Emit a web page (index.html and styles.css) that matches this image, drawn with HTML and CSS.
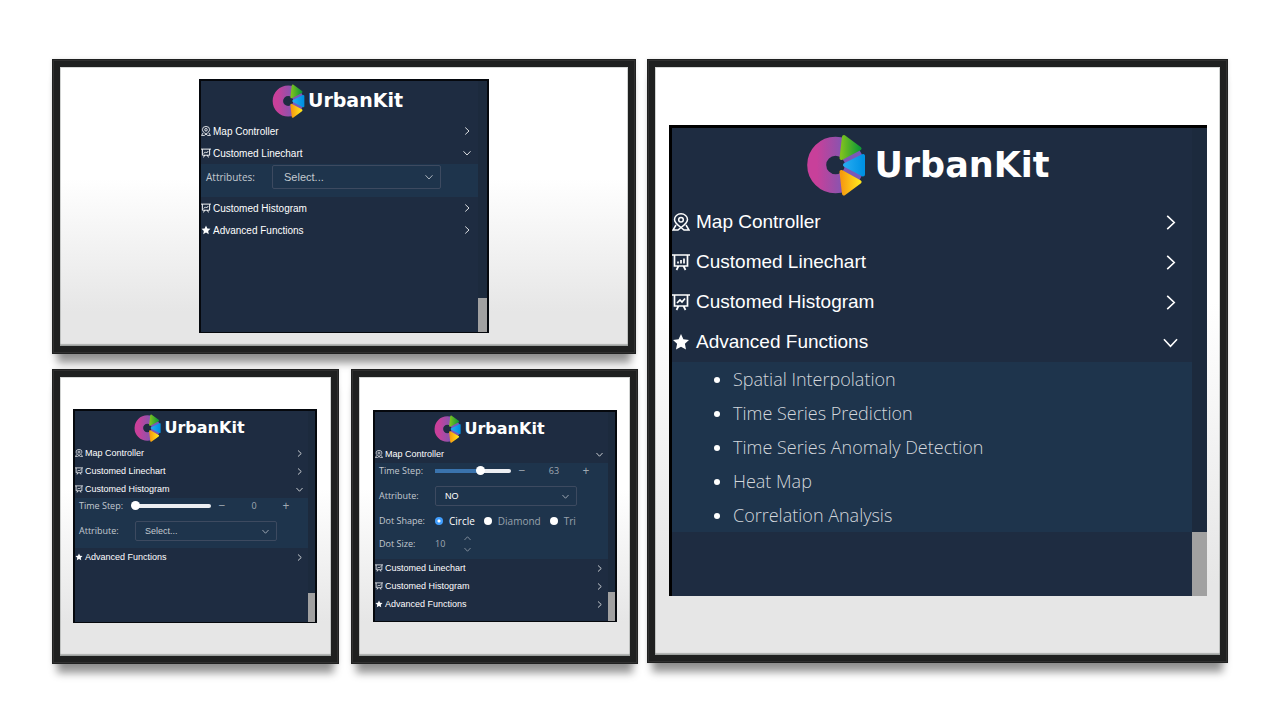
FILE: index.html
```html
<!DOCTYPE html>
<html lang="en">
<head>
<meta charset="utf-8">
<title>UrbanKit</title>
<link rel="stylesheet" href="styles.css">
</head>
<body>
<svg class="sprite" width="0" height="0" aria-hidden="true">
  <defs>
    <linearGradient id="g-ring"><stop offset="0" stop-color="#c8409a"/><stop offset=".5" stop-color="#984fa9"/><stop offset=".8" stop-color="#7a58b8"/><stop offset="1" stop-color="#7a58b8"/></linearGradient>
    <linearGradient id="g-green"><stop offset="0" stop-color="#7dc11f"/><stop offset="1" stop-color="#119a35"/></linearGradient>
    <linearGradient id="g-blue"><stop offset="0" stop-color="#25aaf0"/><stop offset="1" stop-color="#0092e4"/></linearGradient>
    <linearGradient id="g-gold"><stop offset="0" stop-color="#f69a10"/><stop offset="1" stop-color="#ffe51c"/></linearGradient>
  </defs>
  <symbol id="mark" viewBox="0 0 60 62">
    <circle cx="28.5" cy="31" r="18.8" fill="none" stroke="url(#g-ring)" stroke-width="19"/>
    <g stroke-width="4" stroke-linejoin="round">
      <path d="M37 3L52.500 14.500L34.500 24Z" fill="url(#g-green)" stroke="url(#g-green)"/>
      <path d="M38 31L56 22V40.500Z" fill="url(#g-blue)" stroke="url(#g-blue)"/>
      <path d="M34.500 38L52.500 48L37 59.500Z" fill="url(#g-gold)" stroke="url(#g-gold)"/>
    </g>
  </symbol>
  <symbol id="pin" viewBox="0 0 18 18">
    <g fill="none" stroke="currentColor" stroke-width="1.5">
      <path d="M9 14.500C5.500 12 2.500 9.500 2.500 6.500a6.500 5.700 0 0 1 13 0C15.500 9.500 12.500 12 9 14.500Z"/>
      <circle cx="9" cy="6.800" r="2.300"/>
      <path d="M4 12L1 17H6L9 14.500L12 17H17L14 12"/>
    </g>
  </symbol>
  <symbol id="bars" viewBox="0 0 18 18">
    <path d="M0 2H18M2.500 2V13H15.500V2M6.500 13L4.500 17M11.500 13L13.500 17M6 8.500V10.500M9 7V10.500M12 5.500V10.500" fill="none" stroke="currentColor" stroke-width="1.700"/>
  </symbol>
  <symbol id="line" viewBox="0 0 18 18">
    <path d="M0 2H18M2.500 2V13H15.500V2M6.500 13L4.500 17M11.500 13L13.500 17M5 10L8 7L10 9L13 5.500" fill="none" stroke="currentColor" stroke-width="1.700"/>
  </symbol>
  <symbol id="star" viewBox="0 0 18 18">
    <path d="M9 1L11.400 6.200L17 6.900L12.900 10.700L14 16.500L9 13.700L4 16.500L5.100 10.700L1 6.900L6.600 6.200Z" fill="currentColor"/>
  </symbol>
  <symbol id="right" viewBox="0 0 16 16">
    <path d="M4.500 1L12 8L4.500 15" fill="none" stroke="currentColor" stroke-width="1.700"/>
  </symbol>
  <symbol id="down" viewBox="0 0 16 16">
    <path d="M1 4.500L8 12L15 4.500" fill="none" stroke="currentColor" stroke-width="1.700"/>
  </symbol>
  <symbol id="up" viewBox="0 0 16 16">
    <path d="M1 11.500L8 4L15 11.500" fill="none" stroke="currentColor" stroke-width="1.700"/>
  </symbol>
</svg>

<main class="board">
  <div class="column">
    <section class="frame frame-wide">
      <div class="kit kit-md">
        <div class="content">
          <header class="brand"><svg class="mark" aria-hidden="true"><use href="#mark"/></svg><span class="wordmark">UrbanKit</span></header>
          <button class="row"><svg class="icon"><use href="#pin"/></svg><span>Map Controller</span><svg class="chev"><use href="#right"/></svg></button>
          <button class="row"><svg class="icon"><use href="#line"/></svg><span>Customed Linechart</span><svg class="chev"><use href="#down"/></svg></button>
          <div class="fields">
            <div class="field"><label for="a-attr">Attributes:</label>
              <div class="select"><select id="a-attr"><option>Select...</option></select><svg><use href="#down"/></svg></div></div>
          </div>
          <button class="row"><svg class="icon"><use href="#line"/></svg><span>Customed Histogram</span><svg class="chev"><use href="#right"/></svg></button>
          <button class="row"><svg class="icon"><use href="#star"/></svg><span>Advanced Functions</span><svg class="chev"><use href="#right"/></svg></button>
        </div>
        <div class="track"><div class="thumb"></div></div>
      </div>
    </section>

    <div class="pair">
      <section class="frame frame-small">
        <div class="kit kit-sm">
          <div class="content">
            <header class="brand"><svg class="mark" aria-hidden="true"><use href="#mark"/></svg><span class="wordmark">UrbanKit</span></header>
            <button class="row"><svg class="icon"><use href="#pin"/></svg><span>Map Controller</span><svg class="chev"><use href="#right"/></svg></button>
            <button class="row"><svg class="icon"><use href="#line"/></svg><span>Customed Linechart</span><svg class="chev"><use href="#right"/></svg></button>
            <button class="row"><svg class="icon"><use href="#line"/></svg><span>Customed Histogram</span><svg class="chev"><use href="#down"/></svg></button>
            <div class="fields">
              <div class="field"><label for="b-step">Time Step:</label>
                <div class="range"><input class="slider" id="b-step" type="range" min="0" max="100" value="0" style="--fill:0%"><button class="sign" aria-label="Decrease">−</button><input class="number" type="text" value="0" aria-label="Time step value"><button class="sign" aria-label="Increase">+</button></div></div>
              <div class="field"><label for="b-attr">Attribute:</label>
                <div class="select"><select id="b-attr"><option>Select...</option></select><svg><use href="#down"/></svg></div></div>
            </div>
            <button class="row"><svg class="icon"><use href="#star"/></svg><span>Advanced Functions</span><svg class="chev"><use href="#right"/></svg></button>
          </div>
          <div class="track"><div class="thumb"></div></div>
        </div>
      </section>

      <section class="frame frame-map">
        <div class="kit kit-sm">
          <div class="content">
            <header class="brand"><svg class="mark" aria-hidden="true"><use href="#mark"/></svg><span class="wordmark">UrbanKit</span></header>
            <button class="row"><svg class="icon"><use href="#pin"/></svg><span>Map Controller</span><svg class="chev"><use href="#down"/></svg></button>
            <div class="fields">
              <div class="field"><label for="c-step">Time Step:</label>
                <div class="range"><input class="slider" id="c-step" type="range" min="0" max="100" value="63" style="--fill:63%"><button class="sign" aria-label="Decrease">−</button><input class="number" type="text" value="63" aria-label="Time step value"><button class="sign" aria-label="Increase">+</button></div></div>
              <div class="field"><label for="c-attr">Attribute:</label>
                <div class="select chosen"><select id="c-attr"><option>NO</option></select><svg><use href="#down"/></svg></div></div>
              <div class="field"><span id="c-shape">Dot Shape:</span>
                <div class="radios" role="radiogroup" aria-labelledby="c-shape"><label><input type="radio" name="shape" checked><span>Circle</span></label><label><input type="radio" name="shape"><span>Diamond</span></label><label><input type="radio" name="shape"><span>Tri</span></label></div></div>
              <div class="field"><label for="c-size">Dot Size:</label>
                <div class="stepper"><input id="c-size" type="text" value="10"><div class="arrows"><button aria-label="Larger"><svg><use href="#up"/></svg></button><button aria-label="Smaller"><svg><use href="#down"/></svg></button></div></div></div>
            </div>
            <button class="row"><svg class="icon"><use href="#line"/></svg><span>Customed Linechart</span><svg class="chev"><use href="#right"/></svg></button>
            <button class="row"><svg class="icon"><use href="#line"/></svg><span>Customed Histogram</span><svg class="chev"><use href="#right"/></svg></button>
            <button class="row"><svg class="icon"><use href="#star"/></svg><span>Advanced Functions</span><svg class="chev"><use href="#right"/></svg></button>
          </div>
          <div class="track"><div class="thumb"></div></div>
        </div>
      </section>
    </div>
  </div>

  <section class="frame frame-tall">
    <div class="kit kit-lg">
      <div class="content">
        <header class="brand"><svg class="mark" aria-hidden="true"><use href="#mark"/></svg><span class="wordmark">UrbanKit</span></header>
        <button class="row"><svg class="icon"><use href="#pin"/></svg><span>Map Controller</span><svg class="chev"><use href="#right"/></svg></button>
        <button class="row"><svg class="icon"><use href="#bars"/></svg><span>Customed Linechart</span><svg class="chev"><use href="#right"/></svg></button>
        <button class="row"><svg class="icon"><use href="#line"/></svg><span>Customed Histogram</span><svg class="chev"><use href="#right"/></svg></button>
        <button class="row"><svg class="icon"><use href="#star"/></svg><span>Advanced Functions</span><svg class="chev"><use href="#down"/></svg></button>
        <ul class="functions">
          <li>Spatial Interpolation</li>
          <li>Time Series Prediction</li>
          <li>Time Series Anomaly Detection</li>
          <li>Heat Map</li>
          <li>Correlation Analysis</li>
        </ul>
      </div>
      <div class="track"><div class="thumb"></div></div>
    </div>
  </section>
</main>
</body>
</html>
```
FILE: styles.css
```css
* { box-sizing: border-box; }

body {
  margin: 0;
  background: #fff;
  font-family: "Liberation Sans", Arial, sans-serif;
  color: #fff;
}

button, input, select {
  margin: 0;
  padding: 0;
  border: 0;
  background: none;
  color: inherit;
  font: inherit;
}

svg { display: block; }
.sprite { position: absolute; }

.board {
  display: grid;
  grid-template-columns: 586fr 581fr;
  gap: 9px;
  align-items: start;
  padding: 59px 52px;
}

.column { display: grid; gap: 15px; }

.pair {
  display: grid;
  grid-template-columns: 1fr 1fr;
  gap: 12px;
}

.frame {
  display: grid;
  border: 8px solid #1f2020;
  background: linear-gradient(#fff 40%, #e6e6e6 88%);
  background-clip: padding-box;
  box-shadow: inset 0 0 0 1px rgba(120, 125, 122, .3), inset 0 -2px 1px rgba(90, 95, 92, .4), 0 14px 8px -5px rgba(0, 0, 0, .42), 0 0 4px rgba(0, 0, 0, .1);
  outline: 1px solid #303030;
  outline-offset: -2px;
}

.frame-wide { margin-right: 2px; padding: 12px 139px 13px; }
.frame-small { padding: 32px 14px 33px 13px; }
.frame-map { padding: 33px 13px 34px 14px; }
.frame-tall { padding: 58px 13px 59px 14px; }

.kit {
  display: flex;
  border: 2px solid #05080d;
  border-bottom-width: 1px;
  background: #1e2c41;
}

.content { flex: 1; min-width: 0; }

.track {
  display: flex;
  flex-direction: column;
  justify-content: flex-end;
  width: var(--track);
  background: #1c2a3d;
}

.thumb { height: var(--thumb); background: #a1a1a1; }

.kit-md {
  --track: 9px; --thumb: 34px; --head: 39px; --mark: 34px; --word: 19px;
  --row: 22px; --text: 10px; --icon: 10px; --gap: 2px; --chev: 8px; --end: 7px;
  --label: 66px; --small: 10px; --rest: 37px; --shift: 4px; --pad: 11px;
  min-height: 254px;
}

.kit-sm {
  --track: 7px; --thumb: 29px; --head: 33px; --mark: 28px; --word: 16px;
  --row: 18px; --text: 9px; --icon: 8px; --gap: 2px; --chev: 7px; --end: 5px;
  --label: 56px; --small: 9px; --rest: 31px; --shift: 4px; --pad: 9px;
  min-height: 212px;
}

.kit-lg {
  --track: 15px; --thumb: 64px; --head: 74px; --mark: 62px; --word: 35px;
  --row: 40px; --text: 19px; --icon: 18px; --gap: 6px; --chev: 15px; --end: 14px;
  --shift: 8px;
  min-height: 471px;
  border-color: #000;
  border-width: 3px 0 0 3px;
}

.brand {
  display: flex;
  align-items: center;
  justify-content: center;
  gap: var(--gap);
  height: var(--head);
  padding-right: var(--shift);
}

.mark { width: var(--mark); height: var(--mark); }

.wordmark { font: 700 var(--word)/1 "DejaVu Sans", sans-serif; }

.row {
  display: flex;
  align-items: center;
  gap: var(--gap);
  width: 100%;
  height: var(--row);
  padding-right: var(--end);
  font-size: var(--text);
  text-align: left;
}

.icon { width: var(--icon); height: var(--icon); }
.chev { width: var(--chev); height: var(--chev); margin-left: auto; }

.fields {
  display: grid;
  gap: 7px;
  padding: 0 0 7px 4px;
  background: #1e344c;
  font: var(--small)/16px "Open Sans", "Noto Sans", sans-serif;
  color: #c3c9d0;
}

.kit-md .fields { padding: 1px 0 8px 5px; }

.field {
  display: grid;
  grid-template-columns: var(--label) 1fr;
  align-items: center;
}

.select {
  display: grid;
  align-items: center;
  margin-right: var(--rest);
}

.select select {
  grid-area: 1 / 1;
  height: 20px;
  padding-left: var(--pad);
  border: 1px solid #3d4a60;
  border-radius: 2px;
  appearance: none;
  font: var(--small)/1 "Liberation Sans", Arial, sans-serif;
}

.kit-md .select select { height: 24px; font-size: 11px; }
.select.chosen select { color: #fff; }

.select svg {
  grid-area: 1 / 1;
  justify-self: end;
  width: var(--chev);
  height: var(--chev);
  margin-right: 8px;
  pointer-events: none;
}

.range {
  display: grid;
  grid-template-columns: 80px 22px 42px 22px;
  align-items: center;
  margin-left: -4px;
  height: 16px;
  color: #a0a9b3;
}

.slider {
  width: 80px;
  height: 9px;
  appearance: none;
}

.slider::-webkit-slider-runnable-track {
  height: 4px;
  border-radius: 2px;
  background: linear-gradient(to right, transparent 4px, #3a73ad 4px, #3a73ad var(--fill), #eceef2 var(--fill));
}

.slider::-webkit-slider-thumb {
  width: 9px;
  height: 9px;
  margin-top: -3px;
  border: 0;
  border-radius: 50%;
  background: #fff;
  appearance: none;
}

.sign { font-size: 12px; line-height: 12px; }
.number { width: 100%; text-align: center; }

.radios { display: flex; gap: 9px; }
.radios label { display: flex; align-items: center; gap: 6px; color: #98a2ad; font-size: 10px; }

.radios input {
  width: 8px;
  height: 8px;
  border-radius: 50%;
  background: #fff;
  appearance: none;
}

.radios input:checked { background: radial-gradient(circle, #fff 1px, #409eff 2px); }
.radios input:checked + span { color: #fff; font-weight: 500; }

.stepper { display: flex; align-items: center; height: 16px; color: #a0a9b3; }
.stepper input { width: 29px; }
.arrows { display: grid; margin: -3px 0; }
.arrows button { display: grid; place-items: center; height: 11px; }
.arrows svg { width: 7px; height: 7px; }

.functions {
  margin: 0;
  padding: 0 0 0 61px;
  background: #1e344c;
  font: 300 18px/34px "Open Sans", "Noto Sans", sans-serif;
  color: #d3d7dc;
}

.functions li::marker { color: #fff; }
```
